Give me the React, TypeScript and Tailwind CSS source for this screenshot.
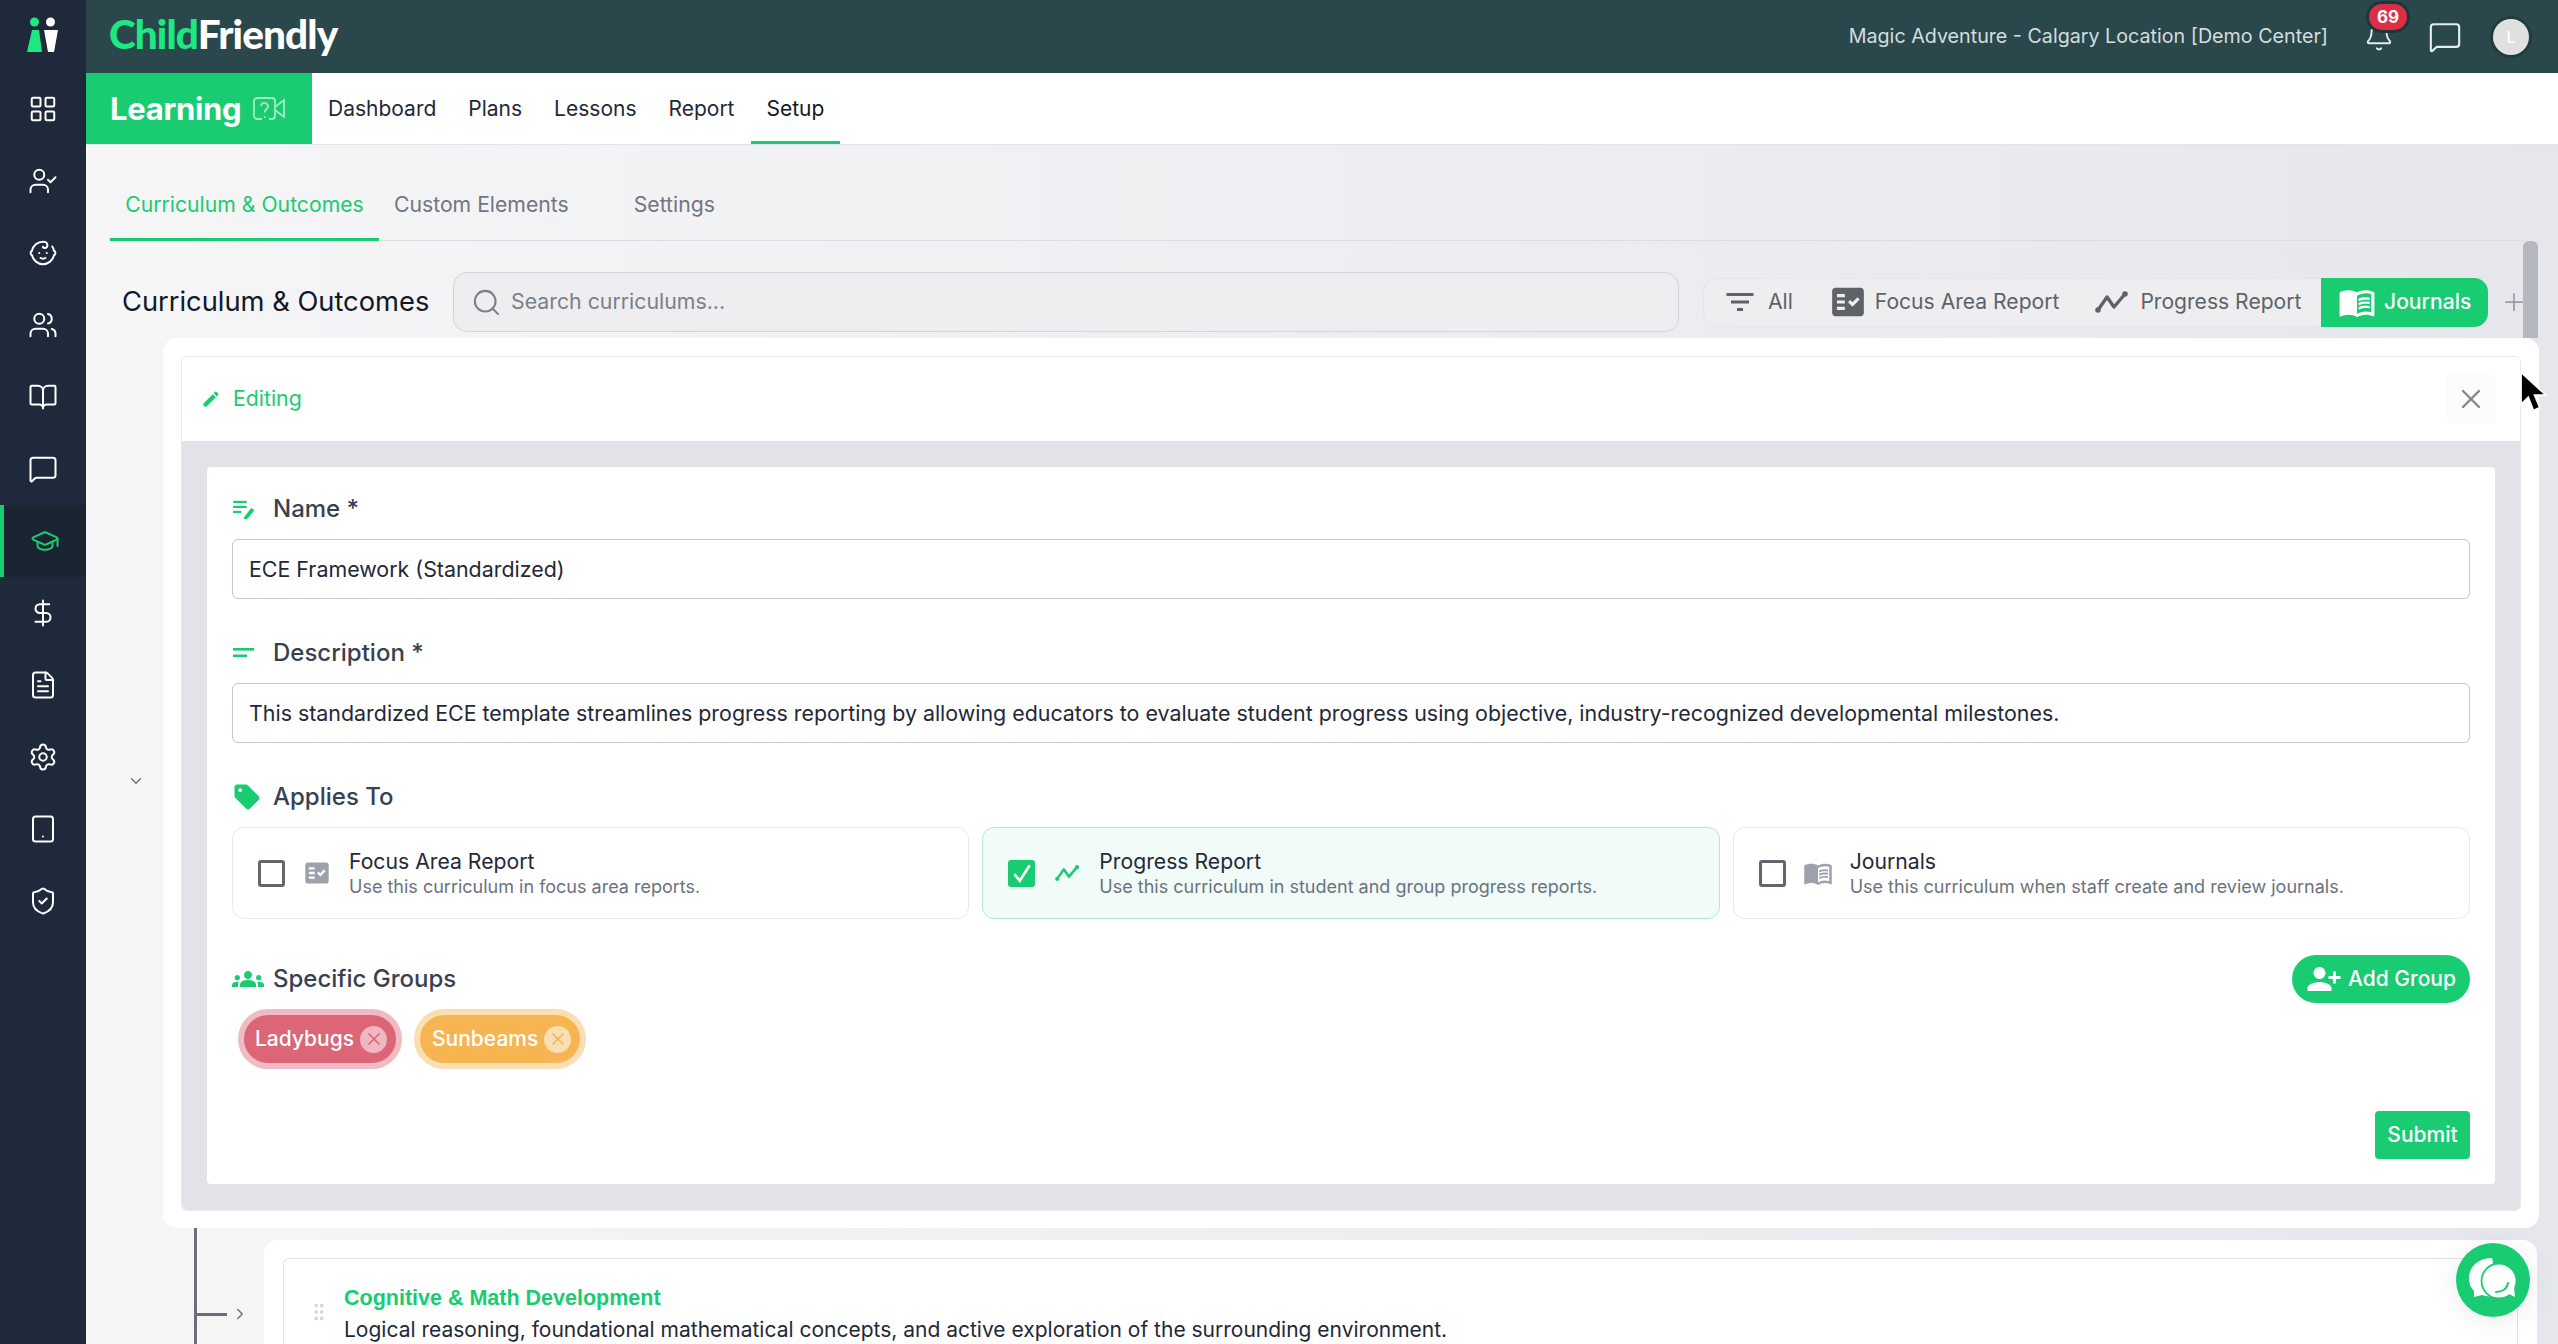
import {
  Baby,
  Bell,
  BookOpen,
  ChevronDown,
  ChevronRight,
  DollarSign,
  FileText,
  GraduationCap,
  GripVertical,
  LayoutGrid,
  MessageSquare,
  Plus,
  Search,
  Settings,
  ShieldCheck,
  Tablet,
  UserCheck,
  Users,
  X,
} from "lucide-react";
import { MdEdit, MdFactCheck, MdFilterList, MdGroups, MdMenuBook, MdPersonAddAlt1, MdSell } from "react-icons/md";

const sideItems = [
  { icon: LayoutGrid },
  { icon: UserCheck },
  { icon: Baby },
  { icon: Users },
  { icon: BookOpen },
  { icon: MessageSquare },
  { icon: GraduationCap, active: true },
  { icon: DollarSign },
  { icon: FileText },
  { icon: Settings },
  { icon: Tablet },
  { icon: ShieldCheck },
];

const navItems = ["Dashboard", "Plans", "Lessons", "Report", "Setup"];

function ProgressIcon({ className }: { className?: string }) {
  return (
    <svg viewBox="0 0 34 24" className={className} fill="none" stroke="currentColor" strokeWidth="3.4" strokeLinejoin="round">
      <path d="M3 20 L12 7 L19 17 L30 4" />
      <circle cx="3" cy="20" r="2.8" fill="currentColor" stroke="none" />
      <circle cx="30" cy="4" r="2.8" fill="currentColor" stroke="none" />
    </svg>
  );
}

function VideoHelpIcon() {
  return (
    <svg viewBox="0 0 34 26" className="ml-[11px] h-[26px] w-[34px] text-[#a5e9c6]" fill="none" stroke="currentColor" strokeWidth="1.8">
      <path d="M10 23 H5 a3 3 0 0 1 -3 -3 V5 a3 3 0 0 1 3 -3 H20 a3 3 0 0 1 3 3 V20 a3 3 0 0 1 -3 3 H17" />
      <path d="M23 11 L32 4 V21 L23 14" />
      <path d="M9 10 a3.5 3.5 0 1 1 5 3.5 c-1 .7 -1.3 1.4 -1.3 3" />
      <circle cx="12.7" cy="21" r="1" fill="currentColor" stroke="none" />
    </svg>
  );
}

function NameIcon() {
  return (
    <svg viewBox="0 0 24 22" className="h-[20px] w-[24px] text-[#19cc72]" fill="currentColor">
      <rect x="0" y="2" width="15" height="2.4" />
      <rect x="0" y="7.5" width="15" height="2.4" />
      <rect x="0" y="13" width="9" height="2.4" />
      <path d="M12 20 L20 10 L23.5 12.5 L15.5 22 L12 22 Z" />
    </svg>
  );
}

function DescIcon() {
  return (
    <svg viewBox="0 0 24 12" className="h-[12px] w-[24px]" fill="#19cc72">
      <rect x="1" y="1" width="21" height="2.6" />
      <rect x="1" y="7.5" width="14" height="2.6" />
    </svg>
  );
}

function ChatBubbles() {
  return (
    <svg viewBox="0 0 50 44" className="h-[44px] w-[50px]">
      <path d="M24 0 C10 0 1 9 1 20 C1 26 3 30 6 33 L6 39 L14 37 C18 39 28 39 32 36 Z" fill="#fff" />
      <circle cx="31" cy="23" r="17.5" fill="#fff" stroke="#19cc72" strokeWidth="1.8" />
      <path d="M41 36 L47 39 L46 29 Z" fill="#fff" />
      <path d="M28 34 C34 34 39 31 40 25" fill="none" stroke="#19cc72" strokeWidth="2" strokeLinecap="round" />
    </svg>
  );
}

function Cursor() {
  return (
    <svg viewBox="0 0 30 42" className="h-[44px] w-[31px]">
      <path d="M2 1 L2 32 L9 25 L14 38 L20 35 L15 23 L26 23 Z" fill="#000" stroke="#fff" strokeWidth="1.6" />
    </svg>
  );
}

function Sidebar() {
  return (
    <aside className="flex w-[86px] shrink-0 flex-col bg-[#1e293b]">
      <div className="flex h-[73px] items-center justify-center pb-[4px]">
        <svg viewBox="0 0 32 36" className="h-[36px] w-[32px]">
          <circle cx="7.5" cy="5" r="4.5" fill="#1de982" />
          <circle cx="23.5" cy="5" r="4.5" fill="#fff" />
          <path d="M5 13 H12 L15 35 H0 Z" fill="#1de982" />
          <path d="M17 13 H31 L27 35 H21 Z" fill="#fff" />
        </svg>
      </div>
      {sideItems.map((item, i) => {
        const Icon = item.icon;
        return (
          <div
            key={i}
            className={
              item.active
                ? "flex h-[72px] items-center justify-center border-l-4 border-[#19cc72] bg-[#1b2531] text-[#19cc72]"
                : "flex h-[72px] items-center justify-center text-white"
            }
          >
            <Icon size={30} strokeWidth={1.6} />
          </div>
        );
      })}
    </aside>
  );
}

function TopBar() {
  return (
    <header className="flex h-[73px] shrink-0 items-center bg-[#2a484c] pl-[23px] pr-[29px]">
      <div className="pb-[5px] text-[40.5px] font-black leading-none tracking-[-0.9px] text-white [font-family:Lato,sans-serif]">
        <span className="text-[#1de982]">Child</span>Friendly
      </div>
      <div className="ml-auto text-[19.7px] text-[#d4dddd]">Magic Adventure - Calgary Location [Demo Center]</div>
      <div className="relative ml-[35px] flex w-[32px] justify-center text-[#e6ecec]">
        <Bell size={30} strokeWidth={1.5} />
        <span className="absolute -top-[18px] left-[6px] rounded-full bg-[#dc2f45] px-[8px] py-[2px] text-[17px] font-bold leading-[22px] text-white ring-3 ring-[#1f3639]">
          69
        </span>
      </div>
      <MessageSquare size={34} strokeWidth={1.5} className="ml-[33px] text-[#e6ecec]" />
      <div className="ml-[31px] flex h-[36px] w-[36px] items-center justify-center rounded-full bg-[#e0e0e0] text-[16px] font-medium text-white shadow-[0_0_0_3px_#223b3e]">
        L
      </div>
    </header>
  );
}

function SubNav() {
  return (
    <nav className="flex h-[72px] shrink-0 border-b border-[#e2e4e8] bg-white">
      <div className="flex w-[226px] items-center bg-[#19cc72] pl-[24px]">
        <span className="text-[31px] font-bold leading-none tracking-[-0.3px] text-white">Learning</span>
        <VideoHelpIcon />
      </div>
      {navItems.map((name) => (
        <div
          key={name}
          className={
            name === "Setup"
              ? "flex items-center border-b-[3px] border-[#19cc72] px-[16px] pt-[3px] text-[21px] text-[#111827]"
              : "flex items-center px-[16px] text-[21px] text-[#1f2937]"
          }
        >
          {name}
        </div>
      ))}
    </nav>
  );
}

function Tabs() {
  return (
    <div className="ml-[24px] mr-[34px] flex h-[96px] shrink-0 items-end border-b border-[#dcdde2] text-[21.2px] text-[#6f7682]">
      <div className="-mb-px flex h-[96px] w-[269px] items-center justify-center border-b-[3px] border-[#19cc72] pt-[26px] text-[#19cc72]">
        Curriculum &amp; Outcomes
      </div>
      <div className="flex h-[96px] items-center pl-[15px] pt-[26px]">Custom Elements</div>
      <div className="flex h-[96px] items-center pl-[65px] pt-[26px]">Settings</div>
    </div>
  );
}

function Toolbar() {
  return (
    <div className="mt-[31px] flex h-[60px] shrink-0 items-center pl-[36px]">
      <h1 className="w-[331px] text-[27.3px] font-normal text-[#111827]">Curriculum &amp; Outcomes</h1>
      <div className="flex h-[60px] w-[1226px] items-center rounded-[14px] border border-[#d4d5da] bg-[#eeeef0] pl-[17px] text-[#7c8089]">
        <Search size={31} strokeWidth={1.6} />
        <span className="ml-[9px] text-[21.3px]">Search curriculums...</span>
      </div>
      <div className="ml-[24px] flex h-[49px] w-[786px] items-center rounded-[14px] border border-[#e4e5e8] bg-[#eeeef0] text-[21.1px] text-[#5e6269]">
        <MdFilterList size={36} className="ml-[18px]" />
        <span className="ml-[10px]">All</span>
        <MdFactCheck size={38} className="ml-[36px]" />
        <span className="ml-[8px]">Focus Area Report</span>
        <ProgressIcon className="ml-[36px] h-[24px] w-[34px]" />
        <span className="ml-[11px]">Progress Report</span>
        <div className="ml-auto flex h-[49px] w-[167px] items-center rounded-r-[14px] bg-[#19cc72] pl-[17px] text-white">
          <MdMenuBook size={38} />
          <span className="ml-[8px] font-medium">Journals</span>
        </div>
      </div>
      <Plus size={28} strokeWidth={1.5} className="ml-[11px] text-[#9a9ca3]" />
    </div>
  );
}

function FieldLabel({ icon, text }: { icon: React.ReactNode; text: string }) {
  return (
    <div className="flex items-center text-[24px] font-medium leading-[30px] text-[#374151]">
      <span className="flex w-[41px] items-center">{icon}</span>
      {text}
    </div>
  );
}

function TextBox({ value }: { value: string }) {
  return (
    <div className="mt-[15px] flex h-[60px] items-center rounded-[6px] border border-[#c4c6cb] bg-white px-[16px] text-[21.4px] text-[#1f2937]">
      {value}
    </div>
  );
}

function AppliesOption({
  title,
  sub,
  checked,
  icon,
}: {
  title: string;
  sub: string;
  checked?: boolean;
  icon: React.ReactNode;
}) {
  return (
    <div
      className={
        checked
          ? "flex h-[92px] items-center rounded-[12px] border border-[#b5e9cf] bg-[#f1fbf7] pl-[25px]"
          : "flex h-[92px] items-center rounded-[12px] border border-[#e8e9ec] bg-white pl-[25px]"
      }
    >
      {checked ? (
        <span className="flex h-[27px] w-[27px] items-center justify-center rounded-[3px] bg-[#19cc72] text-white">
          <svg viewBox="0 0 20 20" className="h-[22px] w-[22px]" fill="none" stroke="currentColor" strokeWidth="2.4">
            <path d="M3 11 L8 17 L17 3" />
          </svg>
        </span>
      ) : (
        <span className="h-[27px] w-[27px] rounded-[3px] border-[3px] border-[#63666c] bg-white" />
      )}
      <span className="flex w-[64px] justify-center">{icon}</span>
      <div>
        <div className="text-[21.2px] leading-[28px] text-[#1f2937]">{title}</div>
        <div className="text-[18px] leading-[24px] text-[#6b7280]">{sub}</div>
      </div>
    </div>
  );
}

function GroupChip({ name, tone }: { name: string; tone: "red" | "amber" }) {
  const red = tone === "red";
  return (
    <div
      className={
        red
          ? "flex h-[60px] items-center rounded-full border-[6px] border-[#f0bbc3] bg-[#dc6677] pl-[11px] pr-[9px] text-white"
          : "flex h-[60px] items-center rounded-full border-[6px] border-[#fbdfb4] bg-[#f7b552] pl-[12px] pr-[9px] text-white"
      }
    >
      <span className="text-[21px] font-medium">{name}</span>
      <span
        className={
          red
            ? "ml-[6px] flex h-[27px] w-[27px] items-center justify-center rounded-full bg-[#efb7c1] text-[#dc6677]"
            : "ml-[6px] flex h-[27px] w-[27px] items-center justify-center rounded-full bg-[#fbdfb4] text-[#f7b552]"
        }
      >
        <X size={20} strokeWidth={2} />
      </span>
    </div>
  );
}

function EditCard() {
  return (
    <section className="ml-[77px] mt-[6px] w-[2376px] shrink-0 rounded-[14px] bg-white p-[18px] pb-[17px]">
      <div className="overflow-hidden rounded-[6px] border border-[#e8e9ec]">
        <div className="flex h-[84px] items-center bg-white pl-[19px] pr-[24px] text-[#19cc72]">
          <MdEdit size={20} />
          <span className="ml-[12px] text-[21.3px]">Editing</span>
          <div className="ml-auto flex h-[50px] w-[50px] items-center justify-center rounded-[6px] bg-[#fcfcfc] text-[#85888e]">
            <X size={32} strokeWidth={1.8} />
          </div>
        </div>
        <div className="bg-[#e2e3e8] px-[25px] pb-[26px] pt-[26px]">
          <div className="h-[717px] rounded-[4px] bg-white px-[25px] pt-[27px]">
            <FieldLabel icon={<NameIcon />} text="Name *" />
            <TextBox value="ECE Framework (Standardized)" />
            <div className="mt-[39px]">
              <FieldLabel icon={<DescIcon />} text="Description *" />
            </div>
            <TextBox value="This standardized ECE template streamlines progress reporting by allowing educators to evaluate student progress using objective, industry-recognized developmental milestones." />
            <div className="mt-[39px]">
              <FieldLabel icon={<MdSell size={30} className="text-[#19cc72]" />} text="Applies To" />
            </div>
            <div className="mt-[15px] grid grid-cols-3 gap-[13px]">
              <AppliesOption
                title="Focus Area Report"
                sub="Use this curriculum in focus area reports."
                icon={<MdFactCheck size={28} className="text-[#9da1aa]" />}
              />
              <AppliesOption
                checked
                title="Progress Report"
                sub="Use this curriculum in student and group progress reports."
                icon={<ProgressIcon className="h-[18px] w-[25px] text-[#19cc72]" />}
              />
              <AppliesOption
                title="Journals"
                sub="Use this curriculum when staff create and review journals."
                icon={<MdMenuBook size={30} className="text-[#9da1aa]" />}
              />
            </div>
            <div className="mt-[36px] flex items-center justify-between">
              <FieldLabel icon={<MdGroups size={32} className="text-[#19cc72]" />} text="Specific Groups" />
              <button className="flex h-[48px] w-[178px] items-center justify-center rounded-full bg-[#19cc72] text-[21px] font-medium text-white">
                <MdPersonAddAlt1 size={36} />
                <span className="ml-[6px]">Add Group</span>
              </button>
            </div>
            <div className="ml-[6px] mt-[6px] flex gap-[12px]">
              <GroupChip name="Ladybugs" tone="red" />
              <GroupChip name="Sunbeams" tone="amber" />
            </div>
            <div className="mt-[42px] flex justify-end">
              <button className="h-[48px] w-[95px] rounded-[4px] bg-[#19cc72] text-[21px] font-medium text-white">Submit</button>
            </div>
          </div>
        </div>
      </div>
    </section>
  );
}

function TreeRow() {
  return (
    <div className="ml-[108px] flex min-h-0 flex-1 border-l-[3px] border-[#6b6f7d] pt-[12px]">
      <div className="mt-[73px] h-[3px] w-[30px] shrink-0 bg-[#6b6f7d]" />
      <ChevronRight size={18} strokeWidth={1.8} className="ml-[4px] mt-[65px] shrink-0 text-[#6b6f7d]" />
      <div className="ml-[15px] w-[2273px] shrink-0 rounded-t-[14px] bg-white px-[19px] pt-[18px]">
        <div className="flex h-[120px] rounded-t-[6px] border border-b-0 border-[#e2e3e7] pl-[24px] pt-[26px]">
          <GripVertical size={22} strokeWidth={2} className="mt-[16px] shrink-0 text-[#d3d5da]" />
          <div className="ml-[14px]">
            <div className="text-[21.5px] font-bold leading-[26px] text-[#19cc72] [font-family:'Liberation_Sans',sans-serif]">
              Cognitive &amp; Math Development
            </div>
            <div className="mt-[6px] text-[21px] leading-[26px] text-[#1f2937]">
              Logical reasoning, foundational mathematical concepts, and active exploration of the surrounding environment.
            </div>
          </div>
        </div>
      </div>
    </div>
  );
}

export default function App() {
  return (
    <div className="flex h-[1344px] w-[2558px] overflow-hidden font-['Inter',sans-serif]">
      <Sidebar />
      <div className="flex min-w-0 flex-1 flex-col">
        <TopBar />
        <SubNav />
        <main className="relative flex min-h-0 flex-1 flex-col overflow-hidden bg-gradient-to-r from-[#f6f6f7] to-[#e6e7ed]">
          <Tabs />
          <Toolbar />
          <EditCard />
          <TreeRow />
          <ChevronDown size={18} strokeWidth={1.8} className="absolute left-[41px] top-[627px] text-[#6b6f7d]" />
          <div className="absolute left-[2437px] top-[96px] h-[97px] w-[15px] rounded-t-[6px] bg-[#b5b7be]" />
          <div className="absolute left-[2433px] top-[226px]">
            <Cursor />
          </div>
          <div className="absolute left-[2370px] top-[1098px] flex h-[74px] w-[74px] items-center justify-center rounded-full bg-[#19cc72] shadow-[0_4px_30px_rgba(0,0,0,0.08)]">
            <ChatBubbles />
          </div>
        </main>
      </div>
    </div>
  );
}
